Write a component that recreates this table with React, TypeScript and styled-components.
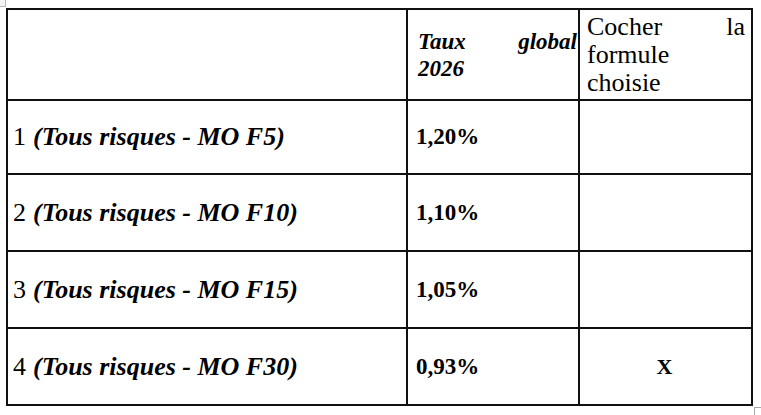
import React from "react";
import styled, { createGlobalStyle } from "styled-components";

const GlobalStyle = createGlobalStyle`
  html, body {
    margin: 0;
    padding: 0;
    background: #ffffff;
  }
  body {
    font-family: "Liberation Serif", serif;
    color: #000000;
  }
`;

const Page = styled.div`
  position: relative;
  width: 761px;
  height: 415px;
  padding: 8px 0 0 6px;
  box-sizing: border-box;
  background: #ffffff;
`;

const MoveHandle = styled.div`
  position: absolute;
  left: 0;
  top: 0;
  width: 5px;
  height: 6px;
  border-right: 1px solid #b8b8b8;
  border-bottom: 1px solid #b8b8b8;
  background: #f4f4f4;
`;

const ResizeHandle = styled.div`
  position: absolute;
  left: 754px;
  top: 407px;
  width: 7px;
  height: 8px;
  border-left: 1px solid #a8a8a8;
  border-top: 1px solid #a8a8a8;
  background: #ffffff;
`;

const Grid = styled.div`
  display: grid;
  grid-template-columns: 400px 172px 173px;
  grid-template-rows: 91px 74px 77px 77px 77px;
  width: 747px;
  box-sizing: border-box;
  border-top: 2px solid #111111;
  border-left: 2px solid #111111;
`;

const Cell = styled.div<{ $pl: number; $pr?: number; $center?: boolean }>`
  display: flex;
  align-items: center;
  justify-content: ${(p) => (p.$center ? "center" : "flex-start")};
  box-sizing: border-box;
  padding: 0 ${(p) => p.$pr ?? 4}px 0 ${(p) => p.$pl}px;
  border-right: 2px solid #111111;
  border-bottom: 2px solid #111111;
  min-width: 0;
`;

const Stack = styled.div`
  display: flex;
  flex-direction: column;
  width: 100%;
`;

const SpreadLine = styled.div`
  display: flex;
  justify-content: space-between;
`;

const ItalicWord = styled.span`
  display: block;
  font-family: "Liberation Serif", serif;
  font-size: 23px;
  line-height: 27px;
  font-weight: 700;
  font-style: italic;
`;

const PlainWord = styled.span`
  display: block;
  font-family: "Liberation Serif", serif;
  font-size: 26px;
  line-height: 28px;
  font-weight: 400;
  font-style: normal;
`;

const Label = styled.div`
  display: flex;
  align-items: baseline;
  white-space: nowrap;
`;

const LabelNum = styled.span`
  font-family: "Liberation Serif", serif;
  font-size: 26px;
  line-height: 28px;
  font-weight: 400;
  margin-right: 7px;
`;

const LabelFormula = styled.span`
  font-family: "Liberation Serif", serif;
  font-size: 26px;
  line-height: 28px;
  font-weight: 700;
  font-style: italic;
`;

const Rate = styled.div`
  font-family: "Liberation Serif", serif;
  font-size: 23px;
  line-height: 28px;
  font-weight: 700;
`;

const Mark = styled.div`
  font-family: "Liberation Serif", serif;
  font-size: 22px;
  line-height: 28px;
  font-weight: 700;
`;

const rows = [
  { n: "1", formula: "(Tous risques - MO F5)", rate: "1,20%", checked: false },
  { n: "2", formula: "(Tous risques - MO F10)", rate: "1,10%", checked: false },
  { n: "3", formula: "(Tous risques - MO F15)", rate: "1,05%", checked: false },
  { n: "4", formula: "(Tous risques - MO F30)", rate: "0,93%", checked: true },
];

export default function App() {
  return (
    <>
      <GlobalStyle />
      <Page>
        <MoveHandle />
        <Grid>
          <Cell $pl={6} />
          <Cell $pl={10} $pr={1}>
            <Stack>
              <SpreadLine>
                <ItalicWord>Taux</ItalicWord>
                <ItalicWord>global</ItalicWord>
              </SpreadLine>
              <ItalicWord>2026</ItalicWord>
            </Stack>
          </Cell>
          <Cell $pl={7} $pr={6}>
            <Stack>
              <SpreadLine>
                <PlainWord>Cocher</PlainWord>
                <PlainWord>la</PlainWord>
              </SpreadLine>
              <PlainWord>formule</PlainWord>
              <PlainWord>choisie</PlainWord>
            </Stack>
          </Cell>
          {rows.map((r) => (
            <React.Fragment key={r.n}>
              <Cell $pl={5}>
                <Label>
                  <LabelNum>{r.n}</LabelNum>
                  <LabelFormula>{r.formula}</LabelFormula>
                </Label>
              </Cell>
              <Cell $pl={8}>
                <Rate>{r.rate}</Rate>
              </Cell>
              <Cell $pl={2} $center>
                {r.checked ? <Mark>X</Mark> : null}
              </Cell>
            </React.Fragment>
          ))}
        </Grid>
        <ResizeHandle />
      </Page>
    </>
  );
}
